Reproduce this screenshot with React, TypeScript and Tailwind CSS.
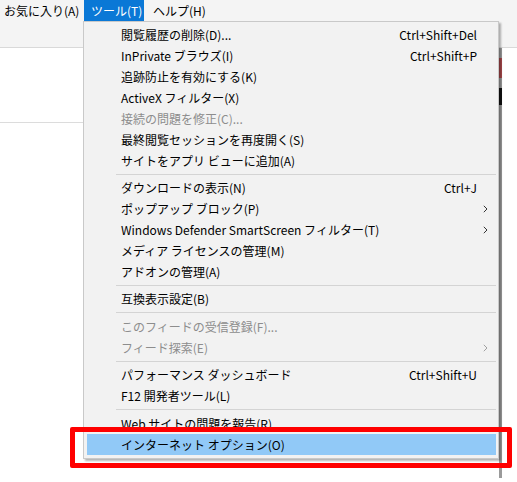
type Item =
  | { kind: 'sep'; h: number }
  | { kind: 'item'; label: string; shortcut?: string; sub?: boolean; disabled?: boolean; active?: boolean };

const toolsMenu: Item[] = [
  { kind: 'item', label: '閲覧履歴の削除(D)...', shortcut: 'Ctrl+Shift+Del' },
  { kind: 'item', label: 'InPrivate ブラウズ(I)', shortcut: 'Ctrl+Shift+P' },
  { kind: 'item', label: '追跡防止を有効にする(K)' },
  { kind: 'item', label: 'ActiveX フィルター(X)' },
  { kind: 'item', label: '接続の問題を修正(C)...', disabled: true },
  { kind: 'item', label: '最終閲覧セッションを再度開く(S)' },
  { kind: 'item', label: 'サイトをアプリ ビューに追加(A)' },
  { kind: 'sep', h: 6 },
  { kind: 'item', label: 'ダウンロードの表示(N)', shortcut: 'Ctrl+J' },
  { kind: 'item', label: 'ポップアップ ブロック(P)', sub: true },
  { kind: 'item', label: 'Windows Defender SmartScreen フィルター(T)', sub: true },
  { kind: 'item', label: 'メディア ライセンスの管理(M)' },
  { kind: 'item', label: 'アドオンの管理(A)' },
  { kind: 'sep', h: 6 },
  { kind: 'item', label: '互換表示設定(B)' },
  { kind: 'sep', h: 7 },
  { kind: 'item', label: 'このフィードの受信登録(F)...', disabled: true },
  { kind: 'item', label: 'フィード探索(E)', sub: true, disabled: true },
  { kind: 'sep', h: 6 },
  { kind: 'item', label: 'パフォーマンス ダッシュボード', shortcut: 'Ctrl+Shift+U' },
  { kind: 'item', label: 'F12 開発者ツール(L)' },
  { kind: 'sep', h: 7 },
  { kind: 'item', label: 'Web サイトの問題を報告(R)' },
  { kind: 'item', label: 'インターネット オプション(O)', active: true },
];

const Chevron = ({ color }: { color: string }) => (
  <svg width="5" height="8" viewBox="0 0 5 8" fill="none">
    <path d="M0.8 0.8 L4 4 L0.8 7.2" stroke={color} strokeWidth="1" />
  </svg>
);

const MenuRow = ({ item }: { item: Item }) => {
  if (item.kind === 'sep') {
    return (
      <div className={`${item.h === 7 ? 'h-[7px]' : 'h-[6px]'} flex items-center pl-[29px]`}>
        <div className="h-px w-full bg-[#d4d4d4]" />
      </div>
    );
  }
  const color = item.disabled ? 'text-[#8d8d8d]' : 'text-[#000]';
  return (
    <div className={`h-[21px] flex items-center ${item.active ? 'bg-[#91c9f7]' : ''} ${color}`}>
      <span className="flex-1 pl-[34px] whitespace-nowrap">{item.label}</span>
      <span className="whitespace-nowrap">{item.shortcut}</span>
      <span className="w-[19px] flex items-center pl-[6px]">
        {item.sub && <Chevron color={item.disabled ? '#a0a0a0' : '#333'} />}
      </span>
    </div>
  );
};

export default function App() {
  return (
    <div
      className="relative w-[517px] h-[482px] bg-white overflow-hidden text-[12px] leading-none"
      style={{ fontFamily: '"Noto Sans CJK JP", "Noto Sans", sans-serif' }}
    >
      {/* browser chrome above the page */}
      <div className="h-[48px] bg-[#f4f4f4] border-b border-[#d9d9d9]">
        <div className="flex h-[21px] items-center text-[#000] whitespace-nowrap">
          <span className="w-[84px] pl-[4px]">お気に入り(A)</span>
          <span className="h-full w-[60px] flex items-center pl-[7px] bg-[#0a78d6] text-white">ツール(T)</span>
          <span className="pl-[9px]">ヘルプ(H)</span>
        </div>
      </div>
      <div className="h-[75px] border-b border-[#dcdcdc] w-[84px]" />

      {/* page content peeking past the menu */}
      <div className="absolute left-[499px] top-[48px] w-[3px] h-[430px] bg-[#9a9a9a]" />
      <div className="absolute left-[499px] top-[58px] w-[3px] h-[20px] bg-[#a5474a]" />
      <div className="absolute left-[499px] top-[88px] w-[3px] h-[17px] bg-[#111]" />

      {/* tools dropdown */}
      <div className="absolute left-[83px] top-[21px] w-[416px] bg-[#f2f2f2] border border-[#c9c9c9] pl-[3px] pr-[2px] pt-[2px] pb-[3px] shadow-[2px_2px_2px_rgba(0,0,0,0.3)]">
        {toolsMenu.map((item, i) => (
          <MenuRow key={i} item={item} />
        ))}
      </div>

      {/* highlight frame */}
      <div className="absolute left-[70px] top-[427px] w-[442px] h-[41px] border-[5px] border-[#ff0000] rounded-[2px]" />
    </div>
  );
}
